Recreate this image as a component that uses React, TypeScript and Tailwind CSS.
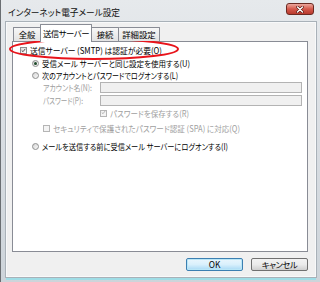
import React, { useLayoutEffect, useRef, useState } from "react";

const font = "[font-family:'Noto_Sans_CJK_JP','Noto_Sans',sans-serif] [font-feature-settings:'palt']";

function Fit({ w, children, className = "" }: { w: number; children: React.ReactNode; className?: string }) {
  const ref = useRef<HTMLSpanElement>(null);
  const [s, setS] = useState(1);
  useLayoutEffect(() => {
    const el = ref.current;
    if (el) {
      const nw = el.getBoundingClientRect().width;
      if (nw > 0) setS(Math.min(1.15, w / nw));
    }
  }, [w]);
  return (
    <span
      ref={ref}
      className={`inline-block origin-left whitespace-nowrap leading-none ${className}`}
      style={{ transform: `scaleX(${s})` }}
    >
      {children}
    </span>
  );
}

function Check({ checked, disabled }: { checked?: boolean; disabled?: boolean }) {
  return (
    <span
      className={`inline-flex w-[7px] h-[7px] shrink-0 items-center justify-center border ${
        disabled ? "border-[#b5b5b5] bg-[#f4f4f4]" : "border-[#8e8f8f] bg-gradient-to-br from-[#dcdcdc] to-[#fdfdfd]"
      }`}
    >
      {checked && (
        <svg width="7" height="7" viewBox="0 0 7 7" className="-mt-[1px]">
          <path d="M1 3.4 L2.8 5.2 L6 1.2" fill="none" stroke={disabled ? "#a8a8a8" : "#3a3a3a"} strokeWidth="1.2" />
        </svg>
      )}
    </span>
  );
}

function Radio({ checked }: { checked?: boolean }) {
  return (
    <span className="inline-flex w-[7px] h-[7px] shrink-0 items-center justify-center rounded-full border border-[#8e8f8f] bg-gradient-to-br from-[#d5d5d5] to-[#fafafa]">
      {checked && <span className="w-[3px] h-[3px] rounded-full bg-[#1e4a2a]" />}
    </span>
  );
}

export default function App() {
  return (
    <div className={`w-[320px] h-[282px] overflow-hidden relative flex flex-col bg-gradient-to-b from-[#e6e9ec] via-[#d8dde2] to-[#cdd4da] border-l border-l-[#6a6e72] ${font}`}>
      {/* title bar */}
      <div className="h-[22px] flex justify-between shrink-0">
        <div className="pl-[7px] pt-[6px] text-[8.8px] text-[#111]">
          <Fit w={112}>インターネット電子メール設定</Fit>
        </div>
        <div className="mr-[6px] mt-[3px] w-[28px] h-[12px] rounded-[3px] border border-[#6b2a22] bg-gradient-to-b from-[#eaa79e] via-[#d4584b] to-[#b83a2d] flex items-center justify-center">
          <svg width="8" height="7" viewBox="0 0 8 7">
            <path d="M1.5 1 L6.5 6 M6.5 1 L1.5 6" stroke="#5a1a14" strokeWidth="2.6" strokeLinecap="round" />
            <path d="M1.5 1 L6.5 6 M6.5 1 L1.5 6" stroke="#ffffff" strokeWidth="1.4" strokeLinecap="round" />
          </svg>
        </div>
      </div>
      {/* client area */}
      <div className="ml-[5px] w-[310px] h-[255px] bg-[#f0f0f0] border border-[#f8f9fa] shadow-[0_0_0_1px_#a9b1b8] flex flex-col pl-[5px] pr-[7px]">
        {/* tabs */}
        <div className="h-[18px] flex items-end pl-[1px] text-[8.4px] text-black relative z-10 whitespace-nowrap">
          <div className="w-[28px] h-[14px] border border-b-0 border-[#898c95] bg-gradient-to-b from-[#f7f7f7] to-[#e3e3e3] flex items-center justify-center rounded-t-[1px]">全般</div>
          <div className="w-[52px] h-[18px] border border-b-0 border-[#898c95] bg-white flex items-center justify-center -mb-[1px] -ml-[1px] -mr-[1px] rounded-t-[1px] tracking-[-0.5px]">送信サーバー</div>
          <div className="w-[28px] h-[14px] border border-b-0 border-[#898c95] bg-gradient-to-b from-[#f7f7f7] to-[#e3e3e3] flex items-center justify-center rounded-t-[1px]">接続</div>
          <div className="w-[41px] h-[14px] border border-b-0 border-l-0 border-[#898c95] bg-gradient-to-b from-[#f7f7f7] to-[#e3e3e3] flex items-center justify-center rounded-t-[1px]">詳細設定</div>
        </div>
        {/* panel */}
        <div className="h-[211px] border border-[#898c95] bg-white flex flex-col text-[8.4px] text-black relative whitespace-nowrap">
          <div className="h-[13px] mt-[2px] flex items-center pl-[7px] gap-[3px]">
            <Check checked />
            <Fit w={132}>送信サーバー (SMTP) は認証が必要(O)</Fit>
          </div>
          <div className="h-[12px] flex items-center pl-[19px] gap-[3px]">
            <Radio checked />
            <Fit w={148}>受信メール サーバーと同じ設定を使用する(U)</Fit>
          </div>
          <div className="h-[12px] flex items-center pl-[19px] gap-[3px]">
            <Radio />
            <Fit w={136}>次のアカウントとパスワードでログオンする(L)</Fit>
          </div>
          <div className="h-[13px] flex items-center pl-[30px] text-[#a0a0a0]">
            <span className="w-[57px] shrink-0">
              <Fit w={49}>アカウント名(N):</Fit>
            </span>
            <div className="w-[202px] h-[11px] border border-[#b3b3b3] bg-[#f0f0f0]" />
          </div>
          <div className="h-[13px] flex items-center pl-[30px] text-[#a0a0a0]">
            <span className="w-[57px] shrink-0">
              <Fit w={40}>パスワード(P):</Fit>
            </span>
            <div className="w-[202px] h-[11px] border border-[#b3b3b3] bg-[#f0f0f0]" />
          </div>
          <div className="h-[12px] flex items-center pl-[87px] gap-[3px] text-[#a0a0a0]">
            <Check checked disabled />
            <Fit w={79}>パスワードを保存する(R)</Fit>
          </div>
          <div className="h-[12px] mt-[3px] flex items-center pl-[30px] gap-[3px] text-[#a0a0a0]">
            <Check disabled />
            <Fit w={187}>セキュリティで保護されたパスワード認証 (SPA) に対応(Q)</Fit>
          </div>
          <div className="h-[12px] mt-[6px] flex items-center pl-[19px] gap-[3px]">
            <Radio />
            <Fit w={186}>メールを送信する前に受信メール サーバーにログオンする(I)</Fit>
          </div>
          {/* red annotation ellipse */}
          <svg className="absolute left-[-5px] top-[-5px] pointer-events-none" width="174" height="24" viewBox="0 0 174 24">
            <ellipse cx="86" cy="12" rx="84" ry="10" fill="none" stroke="#e8141b" strokeWidth="2" />
          </svg>
        </div>
        {/* buttons */}
        <div className="flex justify-end gap-[8px] mt-[6px] text-[8.4px] text-black">
          <button className="w-[57px] h-[13px] rounded-[2px] border border-[#3c7fb1] bg-gradient-to-b from-[#eaf6fd] via-[#d9f0fc] to-[#a7d9f5] shadow-[inset_0_0_0_1px_#b9e6f7] flex items-center justify-center leading-none">OK</button>
          <button className="w-[57px] h-[13px] rounded-[2px] border border-[#707070] bg-gradient-to-b from-[#f2f2f2] via-[#ebebeb] to-[#cfcfcf] flex items-center justify-center leading-none tracking-[-0.5px]">キャンセル</button>
        </div>
      </div>
      <div className="ml-[5px] w-[310px] h-[2px] mt-[1px] bg-[#9fdde6]" />
    </div>
  );
}
